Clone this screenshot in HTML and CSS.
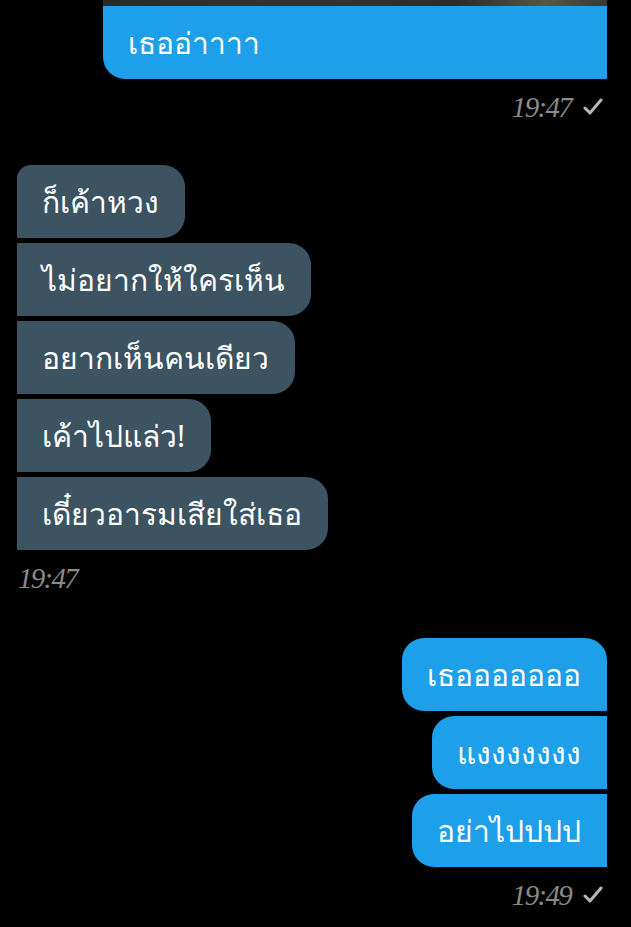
FILE: index.html
```html
<!DOCTYPE html>
<html lang="th">
<head>
    <meta charset="UTF-8">
    <meta name="viewport" content="width=device-width, initial-scale=1.0">
    <title>แชท</title>
    <link rel="stylesheet" href="styles.css">
</head>
<body>
    <div class="chat">
        <div class="group out first-group">
            <div class="photo-edge"></div>
            <div class="bubble out-bubble top-bubble">เธออ่าาาา</div>
            <div class="meta out-meta top-meta">
                <span class="time">19:47</span>
                <svg class="tick" width="20" height="18" viewBox="0 0 20 18"><path d="M2 10 L7 15 L18 2" fill="none" stroke="#b8b8b8" stroke-width="3" stroke-linecap="round" stroke-linejoin="round"/></svg>
            </div>
        </div>

        <div class="group in">
            <div class="bubble in-bubble in-first">ก็เค้าหวง</div>
            <div class="bubble in-bubble">ไม่อยากให้ใครเห็น</div>
            <div class="bubble in-bubble">อยากเห็นคนเดียว</div>
            <div class="bubble in-bubble">เค้าไปแล่ว!</div>
            <div class="bubble in-bubble">เดี๋ยวอารมเสียใส่เธอ</div>
            <div class="meta in-meta">
                <span class="time">19:47</span>
            </div>
        </div>

        <div class="group out last-group">
            <div class="bubble out-bubble out-first">เธอออออออ</div>
            <div class="bubble out-bubble">แงงงงงงง</div>
            <div class="bubble out-bubble">อย่าไปปปป</div>
            <div class="meta out-meta">
                <span class="time">19:49</span>
                <svg class="tick" width="20" height="18" viewBox="0 0 20 18"><path d="M2 10 L7 15 L18 2" fill="none" stroke="#b8b8b8" stroke-width="3" stroke-linecap="round" stroke-linejoin="round"/></svg>
            </div>
        </div>
    </div>
</body>
</html>
```

FILE: styles.css
```css
body {
    margin: 0;
    background: #000;
    font-family: "Noto Sans", "DejaVu Sans", sans-serif;
}
.chat {
    display: flex;
    flex-direction: column;
    width: 631px;
}
.group {
    display: flex;
    flex-direction: column;
    gap: 5px;
}
.group.out {
    align-items: flex-end;
    padding-right: 24px;
}
.group.in {
    align-items: flex-start;
    padding-left: 17px;
    margin-top: 43px;
}
.first-group {
    gap: 0;
}
.last-group {
    margin-top: 45px;
}
.photo-edge {
    width: 504px;
    height: 6px;
    background: linear-gradient(90deg, #2a2a24, #35342c 40%, #2c2b25 70%, #5a5542 88%, #3a382e);
}
.bubble {
    box-sizing: border-box;
    height: 73px;
    padding: 0 26px 0 25px;
    font-size: 30px;
    line-height: 73px;
    color: #fff;
    white-space: nowrap;
    border-radius: 22px;
}
.out-bubble {
    background: #1d9fe9;
    border-top-right-radius: 0;
    border-bottom-right-radius: 0;
}
.out-first {
    border-top-right-radius: 22px;
}
.top-bubble {
    width: 504px;
    border-radius: 0 0 0 22px;
}
.in-bubble {
    background: #3c5361;
    border-top-left-radius: 0;
    border-bottom-left-radius: 0;
}
.in-first {
    border-top-left-radius: 14px;
}
.meta {
    display: flex;
    align-items: center;
    gap: 12px;
    height: 30px;
    margin-top: 8px;
}
.top-meta {
    margin-top: 13px;
}
.out-meta {
    padding-right: 4px;
}
.in-meta {
    padding-left: 1px;
}
.time {
    font-family: "Liberation Serif", serif;
    font-style: italic;
    font-size: 29px;
    letter-spacing: -1.7px;
    color: #8a8a8a;
}
```
